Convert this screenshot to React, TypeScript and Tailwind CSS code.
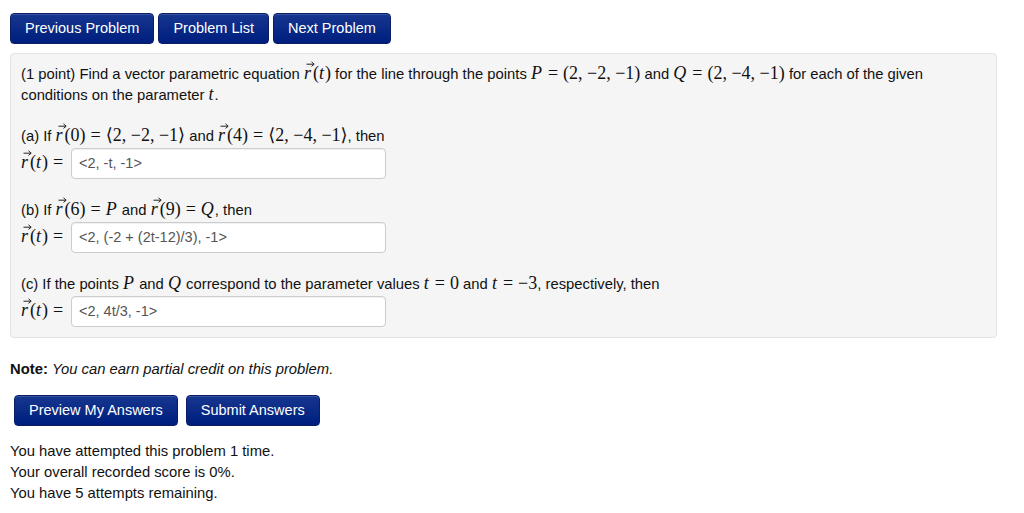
import React from "react";

const SANS = { fontFamily: '"Liberation Sans", Arial, sans-serif' };

function NavButton({ children }: { children: React.ReactNode }) {
  return (
    <button className="h-[31px] px-[14px] rounded-[4px] border border-[#0a1e66] bg-gradient-to-b from-[#17368f] to-[#001d7e] text-white text-[14.5px] leading-none shadow-[inset_0_1px_0_rgba(255,255,255,0.15)]">
      {children}
    </button>
  );
}

function M({ children }: { children: React.ReactNode }) {
  return (
    <span className="text-[18px] leading-none" style={{ fontFamily: '"Liberation Serif", "DejaVu Serif", serif' }}>
      {children}
    </span>
  );
}

function I({ children }: { children: React.ReactNode }) {
  return <i className="pr-[1px]">{children}</i>;
}

function Eq() {
  return <span className="mx-[5px]">=</span>;
}

function VecR() {
  return (
    <span className="relative inline-block pr-[2px]">
      <i>r</i>
      <svg className="absolute left-[2px] top-[-3px]" width="9" height="6" viewBox="0 0 9 6">
        <path d="M0.5 3.2 L7.8 3.2" stroke="#222" strokeWidth="1" fill="none" />
        <path d="M5.5 0.8 L8.2 3.2 L5.5 5.4" stroke="#222" strokeWidth="1" fill="none" />
      </svg>
    </span>
  );
}

function AnswerRow({ value }: { value: string }) {
  return (
    <div className="flex items-center mt-[1px] h-[31px]">
      <div className="w-[50px] whitespace-nowrap leading-[21px]">
        <M>
          <VecR />(<I>t</I>)<Eq />
        </M>
      </div>
      <div className="w-[315px] h-[31px] rounded-[4px] border border-[#cccccc] bg-white flex items-center px-[7px] text-[14.5px] text-[#555555] shadow-[inset_0_1px_1px_rgba(0,0,0,0.06)]">
        {value}
      </div>
    </div>
  );
}

export default function App() {
  return (
    <div className="w-[1024px] h-[513px] bg-white text-[#111111] text-[14.8px] pl-[10px] pt-[13px]" style={SANS}>
      <div className="flex gap-[4px]">
        <NavButton>Previous Problem</NavButton>
        <NavButton>Problem List</NavButton>
        <NavButton>Next Problem</NavButton>
      </div>

      <div className="mt-[9px] w-[987px] rounded-[4px] border border-[#e3e3e3] bg-[#f5f5f5] pl-[10px] pr-[10px] pt-[10px] pb-[10px] leading-[21px]">
        <p className="h-[42px]">
          (1 point) Find a vector parametric equation{" "}
          <M>
            <VecR />(<I>t</I>)
          </M>{" "}
          for the line through the points{" "}
          <M>
            <I>P</I>
            <Eq />
            (2, −2, −1)
          </M>{" "}
          and{" "}
          <M>
            <I>Q</I>
            <Eq />
            (2, −4, −1)
          </M>{" "}
          for each of the given conditions on the parameter{" "}
          <M>
            <I>t</I>
          </M>
          .
        </p>

        <div className="mt-[20px]">
          <p className="h-[21px]">
            (a) If{" "}
            <M>
              <VecR />(0)
              <Eq />
              ⟨2, −2, −1⟩
            </M>{" "}
            and{" "}
            <M>
              <VecR />(4)
              <Eq />
              ⟨2, −4, −1⟩
            </M>
            , then
          </p>
          <AnswerRow value="<2, -t, -1>" />
        </div>

        <div className="mt-[21px]">
          <p className="h-[21px]">
            (b) If{" "}
            <M>
              <VecR />(6)
              <Eq />
              <I>P</I>
            </M>{" "}
            and{" "}
            <M>
              <VecR />(9)
              <Eq />
              <I>Q</I>
            </M>
            , then
          </p>
          <AnswerRow value="<2, (-2 + (2t-12)/3), -1>" />
        </div>

        <div className="mt-[21px]">
          <p className="h-[21px]">
            (c) If the points{" "}
            <M>
              <I>P</I>
            </M>{" "}
            and{" "}
            <M>
              <I>Q</I>
            </M>{" "}
            correspond to the parameter values{" "}
            <M>
              <I>t</I>
              <Eq />0
            </M>{" "}
            and{" "}
            <M>
              <I>t</I>
              <Eq />
              −3
            </M>
            , respectively, then
          </p>
          <AnswerRow value="<2, 4t/3, -1>" />
        </div>
      </div>

      <p className="mt-[21px] leading-[21px]">
        <b>Note:</b> <i>You can earn partial credit on this problem.</i>
      </p>

      <div className="flex gap-[8px] ml-[4px] mt-[15px]">
        <NavButton>Preview My Answers</NavButton>
        <NavButton>Submit Answers</NavButton>
      </div>

      <div className="mt-[15px] leading-[21px]">
        <p>You have attempted this problem 1 time.</p>
        <p>Your overall recorded score is 0%.</p>
        <p>You have 5 attempts remaining.</p>
      </div>
    </div>
  );
}
